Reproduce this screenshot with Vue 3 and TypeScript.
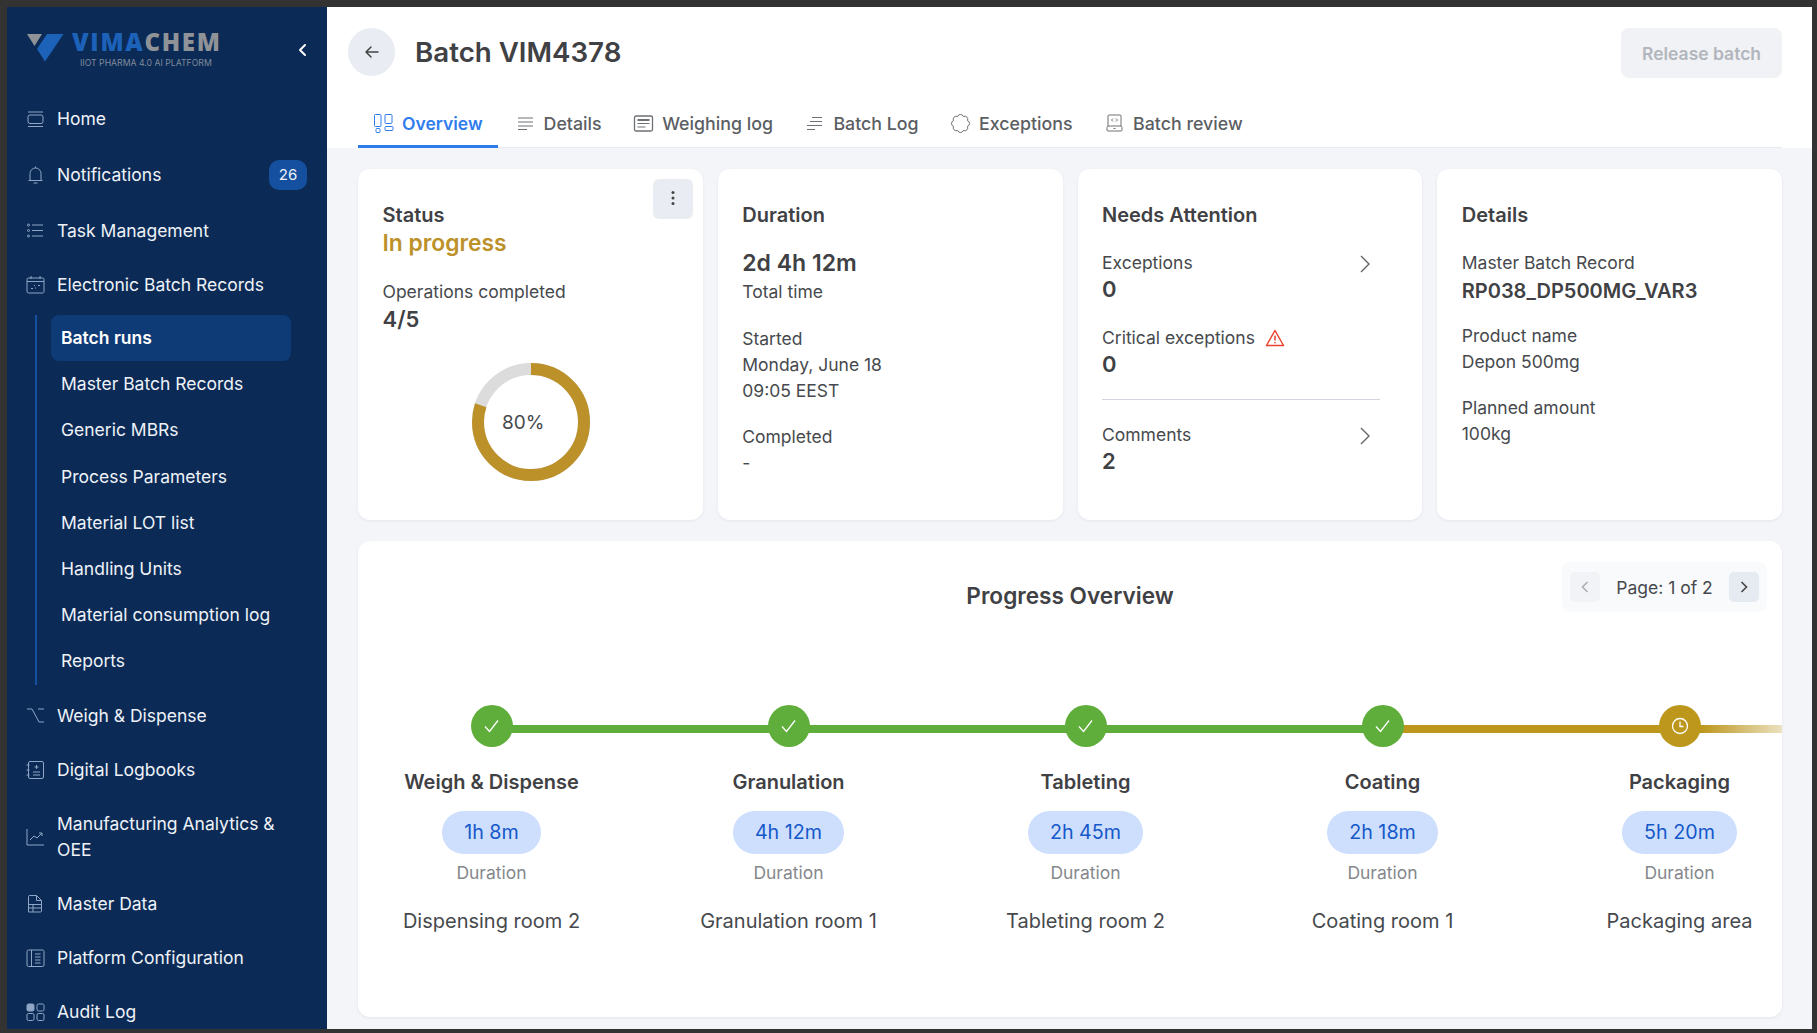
<script setup lang="ts">
interface SubLink { label: string; active?: boolean }
interface Step { name: string; time: string; room: string; state: 'done' | 'running' }

const topNav = [
  { key: 'home', label: 'Home' },
  { key: 'bell', label: 'Notifications', badge: '26' },
  { key: 'tasks', label: 'Task Management' },
  { key: 'records', label: 'Electronic Batch Records' },
]

const subNav: SubLink[] = [
  { label: 'Batch runs', active: true },
  { label: 'Master Batch Records' },
  { label: 'Generic MBRs' },
  { label: 'Process Parameters' },
  { label: 'Material LOT list' },
  { label: 'Handling Units' },
  { label: 'Material consumption log' },
  { label: 'Reports' },
]

const bottomNav = [
  { key: 'weigh', label: 'Weigh & Dispense' },
  { key: 'logbook', label: 'Digital Logbooks' },
  { key: 'chart', label: 'Manufacturing Analytics & OEE' },
  { key: 'data', label: 'Master Data' },
  { key: 'config', label: 'Platform Configuration' },
  { key: 'audit', label: 'Audit Log' },
]

const tabs = [
  { key: 'overview', label: 'Overview', active: true },
  { key: 'details', label: 'Details' },
  { key: 'weighing', label: 'Weighing log' },
  { key: 'batch', label: 'Batch Log' },
  { key: 'exceptions', label: 'Exceptions' },
  { key: 'review', label: 'Batch review' },
]

const steps: Step[] = [
  { name: 'Weigh & Dispense', time: '1h 8m', room: 'Dispensing room 2', state: 'done' },
  { name: 'Granulation', time: '4h 12m', room: 'Granulation room 1', state: 'done' },
  { name: 'Tableting', time: '2h 45m', room: 'Tableting room 2', state: 'done' },
  { name: 'Coating', time: '2h 18m', room: 'Coating room 1', state: 'done' },
  { name: 'Packaging', time: '5h 20m', room: 'Packaging area', state: 'running' },
]

// donut ring, r=53 so the circumference is about 333
const ringLength = 2 * Math.PI * 53
const ringDash = `${ringLength * 0.8} ${ringLength}`
</script>

<template>
  <div class="frame">
    <aside class="sidebar">
      <div class="brand">
        <svg class="brand-mark" width="37" height="28" viewBox="0 0 37 28">
          <polygon points="0,0 15,0 7.500,12" fill="#8f9398" />
          <polygon points="10,15 20,0 36.500,0 18,27.500" fill="#1c62b9" />
        </svg>
        <div class="brand-text">
          <div class="brand-name"><span class="vima">VIMA</span><span class="chem">CHEM</span></div>
          <div class="brand-sub">IIOT PHARMA 4.0 AI PLATFORM</div>
        </div>
        <svg class="collapse" width="12" height="14" viewBox="0 0 12 14" fill="none">
          <path d="M9 2 4 7l5 5" stroke="#fff" stroke-width="2" stroke-linecap="round" stroke-linejoin="round" />
        </svg>
      </div>

      <nav class="nav">
        <a v-for="item in topNav" :key="item.label" class="nav-item">
          <svg class="nav-icon" width="20" height="20" viewBox="0 0 20 20" fill="none" stroke="currentColor" stroke-width="1">
            <template v-if="item.key === 'home'">
              <path d="M3 3h15M3 17.500h15" />
              <rect x="3" y="6" width="15" height="8.500" rx="2" />
            </template>
            <template v-else-if="item.key === 'bell'">
              <path d="M3.500 15.500h14M5 15V8.500a5.500 5.500 0 0 1 11 0V15M10.500 1.500V3M8.500 18h4" />
            </template>
            <template v-else-if="item.key === 'tasks'">
              <path d="M7 4h11M7 9.500h11M7 15h11" />
              <circle cx="3.500" cy="4" r="1" />
              <circle cx="3.500" cy="9.500" r="1" />
              <circle cx="3.500" cy="15" r="1" />
            </template>
            <template v-else>
              <rect x="2" y="3" width="17" height="15" rx="1.500" />
              <path d="M2 6.500h17M6 1v3M15 1v3M6 13.500h2M10 13h1M13 10.500h2M9 10.500h1" />
            </template>
          </svg>
          <span class="nav-label">{{ item.label }}</span>
          <span v-if="item.badge" class="badge">{{ item.badge }}</span>
        </a>

        <div class="subnav">
          <a v-for="link in subNav" :key="link.label" class="sub-item" :class="{ active: link.active }">{{ link.label }}</a>
        </div>

        <a v-for="item in bottomNav" :key="item.label" class="nav-item">
          <svg class="nav-icon" width="20" height="20" viewBox="0 0 20 20" fill="none" stroke="currentColor" stroke-width="1">
            <template v-if="item.key === 'weigh'">
              <path d="M2 3h5l7 13h5M13 3h6" />
            </template>
            <template v-else-if="item.key === 'logbook'">
              <rect x="3.500" y="1.500" width="15" height="17" rx="1.500" />
              <path d="M1.500 5h3M1.500 10h3M1.500 15h3M8 12h7M8 15h7M11.500 5v4M9.500 7h4" />
            </template>
            <template v-else-if="item.key === 'chart'">
              <path d="M2 2v16h17M5 13l4-4 3 2 5-5M14 6h3v3" />
            </template>
            <template v-else-if="item.key === 'data'">
              <path d="M3.500 18V2.500a1 1 0 0 1 1-1h7l5 5V17a1 1 0 0 1-1 1zM11.500 1.500v5h5M3.500 10.500h13M3.500 14h13M8 10.500V18" />
            </template>
            <template v-else-if="item.key === 'config'">
              <rect x="2" y="2" width="17" height="16.500" rx="1.500" />
              <path d="M6.500 2v16.500M10 6h5.500M10 9h5.500M10 12h5.500M10 15h5.500" />
            </template>
            <template v-else>
              <rect x="2" y="2" width="7" height="7" rx="1.500" fill="currentColor" />
              <rect x="12" y="2" width="7" height="7" rx="1.500" />
              <rect x="2" y="11.500" width="7" height="7" rx="1.500" />
              <rect x="12" y="11.500" width="7" height="7" rx="1.500" />
            </template>
          </svg>
          <span class="nav-label">{{ item.label }}</span>
        </a>
      </nav>
    </aside>

    <main class="main">
      <header class="top">
        <div class="title-row">
          <button class="back" aria-label="Back">
            <svg width="18" height="18" viewBox="0 0 18 18" fill="none" stroke="#444" stroke-width="1.500" stroke-linecap="round" stroke-linejoin="round">
              <path d="M15 9H3M8 4 3 9l5 5" />
            </svg>
          </button>
          <h1>Batch VIM4378</h1>
          <button class="release">Release batch</button>
        </div>
        <div class="tabs">
          <a v-for="tab in tabs" :key="tab.label" class="tab" :class="{ active: tab.active }">
            <svg width="21" height="21" viewBox="0 0 21 21" fill="none" stroke="currentColor" stroke-width="1">
              <template v-if="tab.key === 'overview'">
                <rect x="1.500" y="1.500" width="6.500" height="12" rx="1" />
                <rect x="12" y="1.500" width="7" height="9" rx="1" />
                <rect x="12" y="13.500" width="8" height="4" rx="1" />
                <rect x="3" y="15.500" width="4" height="4" rx="1" />
              </template>
              <template v-else-if="tab.key === 'details'">
                <path d="M3 5h15M3 9h15M3 13h15M3 16.500h9" />
              </template>
              <template v-else-if="tab.key === 'batch'">
                <path d="M8 4.500h10M6 8.500h12M3 12.500h15M3 16.500h8" />
              </template>
              <template v-else-if="tab.key === 'weighing'">
                <rect x="1.500" y="3" width="18" height="15" rx="1.500" stroke-width="1.300" />
                <path d="M4.500 7h12" stroke-width="2" />
                <path d="M4.500 10.500h12M4.500 14h8" />
              </template>
              <template v-else-if="tab.key === 'exceptions'">
                <path d="M13.370 3.570A3 3 0 0 1 17.430 7.630A3 3 0 0 1 17.430 13.370A3 3 0 0 1 13.370 17.430A3 3 0 0 1 7.630 17.430A3 3 0 0 1 3.570 13.370A3 3 0 0 1 3.570 7.630A3 3 0 0 1 7.630 3.570A3 3 0 0 1 13.370 3.570Z" />
              </template>
              <template v-else>
                <path d="M5 2h11a1 1 0 0 1 1 1v10H4V3a1 1 0 0 1 1-1zM4 13l-1 1.500V17a1 1 0 0 0 1 1h13a1 1 0 0 0 1-1v-2.500L17 13M9.500 15.500h2M9 5.500 7.500 7 9 8.500M12 5.500 13.500 7 12 8.500" />
              </template>
            </svg>
            {{ tab.label }}
          </a>
        </div>
      </header>

      <section class="content">
        <div class="cards">
          <article class="card">
            <button class="more" aria-label="More">
              <svg width="4" height="16" viewBox="0 0 4 16" fill="#444">
                <circle cx="2" cy="2.500" r="1.500" />
                <circle cx="2" cy="8" r="1.500" />
                <circle cx="2" cy="13.500" r="1.500" />
              </svg>
            </button>
            <h2>Status</h2>
            <div class="status">In progress</div>
            <div class="label gap-status">Operations completed</div>
            <div class="value">4/5</div>
            <div class="donut">
              <svg width="118" height="118" viewBox="0 0 118 118">
                <circle cx="59" cy="59" r="53" fill="none" stroke="#dcdcdc" stroke-width="12" />
                <circle cx="59" cy="59" r="53" fill="none" stroke="#bd912a" stroke-width="12" :stroke-dasharray="ringDash" transform="rotate(-90 59 59)" />
              </svg>
              <span class="donut-text">80%</span>
            </div>
          </article>

          <article class="card">
            <h2>Duration</h2>
            <div class="big">2d 4h 12m</div>
            <div class="label">Total time</div>
            <div class="label gap-block">Started</div>
            <div class="label">Monday, June 18</div>
            <div class="label">09:05 EEST</div>
            <div class="label gap-done">Completed</div>
            <div class="label">-</div>
          </article>

          <article class="card">
            <h2>Needs Attention</h2>
            <div class="attention first">
              <div>
                <div class="label">Exceptions</div>
                <div class="value tight">0</div>
              </div>
              <svg class="chev" width="12" height="20" viewBox="0 0 12 20" fill="none" stroke="#666" stroke-width="1.400">
                <path d="m2 2 8 8-8 8" />
              </svg>
            </div>
            <div class="attention second">
              <div>
                <div class="label critical">Critical exceptions
                  <svg width="20" height="18" viewBox="0 0 20 18" fill="none" stroke="#e8432e" stroke-width="1.500" stroke-linejoin="round">
                    <path d="M10 1.500 1.500 16.500h17zM10 6.500v5M10 13v1.200" />
                  </svg>
                </div>
                <div class="value tight">0</div>
              </div>
            </div>
            <div class="attention third">
              <div>
                <div class="label">Comments</div>
                <div class="value tight">2</div>
              </div>
              <svg class="chev" width="12" height="20" viewBox="0 0 12 20" fill="none" stroke="#666" stroke-width="1.400">
                <path d="m2 2 8 8-8 8" />
              </svg>
            </div>
          </article>

          <article class="card">
            <h2>Details</h2>
            <div class="label gap-details">Master Batch Record</div>
            <div class="mbr">RP038_DP500MG_VAR3</div>
            <div class="label gap-product">Product name</div>
            <div class="label">Depon 500mg</div>
            <div class="label gap-planned">Planned amount</div>
            <div class="label">100kg</div>
          </article>
        </div>

        <article class="progress">
          <div class="pager">
            <button class="page-btn" disabled>
              <svg width="10" height="14" viewBox="0 0 10 14" fill="none" stroke="#a9aeb5" stroke-width="1.600"><path d="M7.500 2 2.500 7l5 5" /></svg>
            </button>
            <span>Page: 1 of 2</span>
            <button class="page-btn next">
              <svg width="10" height="14" viewBox="0 0 10 14" fill="none" stroke="#444" stroke-width="1.600"><path d="m2.500 2 5 5-5 5" /></svg>
            </button>
          </div>
          <h3>Progress Overview</h3>
          <div class="timeline">
            <div v-for="(step, i) in steps" :key="step.name" class="step">
              <div class="track">
                <span class="line" :class="i < 3 ? 'green' : i === 3 ? 'gold' : 'fade'"></span>
                <span class="node" :class="step.state">
                  <svg v-if="step.state === 'done'" width="20" height="20" viewBox="0 0 20 20" fill="none" stroke="#fff" stroke-width="1.300">
                    <path d="m3 10.500 4.500 5L16 4.500" />
                  </svg>
                  <svg v-else width="18" height="18" viewBox="0 0 18 18" fill="none" stroke="#fff" stroke-width="1.300">
                    <circle cx="9" cy="9" r="7.500" />
                    <path d="M9 4.500V9.500h3.500" />
                  </svg>
                </span>
              </div>
              <div class="step-name">{{ step.name }}</div>
              <div class="pill">{{ step.time }}</div>
              <div class="step-caption">Duration</div>
              <div class="step-room">{{ step.room }}</div>
            </div>
          </div>
        </article>
      </section>
    </main>
  </div>
</template>

<style>
html, body {
  margin: 0;
  background: #333;
  overflow: hidden;
}
</style>

<style scoped>
.frame {
  width: 1817px;
  height: 1033px;
  box-sizing: border-box;
  padding: 7px 5px 4px 7px;
  background: #333333;
  display: flex;
  font-family: Inter, "Liberation Sans", sans-serif;
  color: #3f4144;
  overflow: hidden;
}

/* sidebar */
.sidebar {
  width: 320px;
  flex: none;
  background: #0b2a55;
  overflow: hidden;
  color: #eef2f8;
}
.brand {
  display: flex;
  align-items: flex-start;
  height: 77px;
  padding: 23px 19px 0 20px;
  box-sizing: border-box;
}
.brand-mark { flex: none; margin-top: 4px; }
.brand-text { margin-left: 8px; width: 176px; }
.brand-name {
  font-size: 24px;
  line-height: 24px;
  font-weight: 800;
  letter-spacing: 1.700px;
  font-family: "Open Sans", sans-serif;
  white-space: nowrap;
}
.vima { color: #1c62b9; }
.chem { color: #8f9398; }
.brand-sub {
  margin: 3px 0 0 8px;
  font-size: 8.700px;
  line-height: 12px;
  color: #7f8b9b;
  white-space: nowrap;
}
.collapse { margin: 13px 0 0 auto; }

.nav { display: flex; flex-direction: column; padding-top: 8px; }
.nav-item {
  display: flex;
  align-items: center;
  padding: 14px 18px 14px 18px;
  font-size: 17.500px;
  line-height: 26px;
  color: #eef2f8;
}
.nav-icon { flex: none; color: #8fa6c6; margin-right: 12px; }
.nav-label { flex: 1; max-width: 245px; }
.badge {
  width: 38px;
  height: 30px;
  line-height: 30px;
  text-align: center;
  background: #14509f;
  border-radius: 10px;
  font-size: 15px;
  margin-left: auto;
  margin-right: 2px;
}
.subnav {
  margin: 3px 0 4px 28px;
  border-left: 2px solid #14509f;
  padding-left: 14px;
  padding-right: 36px;
  display: flex;
  flex-direction: column;
}
.sub-item {
  height: 46.200px;
  line-height: 46.200px;
  padding-left: 10px;
  font-size: 17.500px;
  border-radius: 8px;
  color: #eef2f8;
  white-space: nowrap;
}
.sub-item.active {
  background: #0e3a75;
  font-weight: 600;
  color: #fff;
}

/* header */
.main {
  flex: 1;
  min-width: 0;
  display: flex;
  flex-direction: column;
  background: #f3f5f9;
}
.top {
  background: #fff;
  padding: 21px 30px 0 21px;
  height: 141px;
  box-sizing: border-box;
}
.title-row { display: flex; align-items: flex-start; height: 50px; }
.back {
  width: 47px;
  height: 48px;
  flex: none;
  border: 0;
  border-radius: 50%;
  background: #e9ecf2;
  display: flex;
  align-items: center;
  justify-content: center;
  padding: 0;
}
h1 {
  margin: 0 0 0 20px;
  font-size: 27.700px;
  line-height: 49px;
  font-weight: 600;
  color: #3f4144;
  flex: 1;
}
.release {
  width: 161px;
  height: 50px;
  border: 0;
  border-radius: 8px;
  background: #f1f2f5;
  color: #b1b6bd;
  font: 600 17.500px Inter, sans-serif;
}
.tabs {
  display: flex;
  margin: 21px 0 0 10px;
  border-bottom: 1px solid #e6e9ef;
  height: 49px;
  box-sizing: border-box;
}
.tab {
  display: flex;
  align-items: center;
  gap: 8px;
  height: 48px;
  box-sizing: border-box;
  padding: 0 15px;
  font-size: 17.800px;
  font-weight: 500;
  color: #5b5e63;
  margin-right: 1.500px;
}
.tab svg { color: #6d7075; }
.tab.active {
  color: #2f7ded;
  font-size: 17.500px;
  font-weight: 600;
  border-bottom: 3px solid #2f7ded;
  height: 49px;
  padding-top: 3px;
  margin-right: 2px;
}
.tab.active svg { color: #2f7ded; }

/* cards */
.content {
  padding: 21px 30px 0 31px;
  display: flex;
  flex-direction: column;
  gap: 21px;
}
.cards {
  display: grid;
  grid-template-columns: repeat(4, 1fr);
  gap: 15px;
}
.card, .progress {
  background: #fff;
  border-radius: 12px;
  box-shadow: 0 1px 3px rgba(40, 50, 80, 0.08);
  position: relative;
  box-sizing: border-box;
}
.card { height: 351px; padding: 32px 24.500px 0; }
h2 {
  margin: 0;
  font-size: 20px;
  line-height: 28px;
  font-weight: 600;
  color: #3f4144;
}
.more {
  position: absolute;
  top: 10px;
  right: 10px;
  width: 40px;
  height: 40px;
  border: 0;
  border-radius: 6px;
  background: #e9ecf2;
  padding: 0;
}
.status {
  font-size: 22.800px;
  line-height: 28px;
  font-weight: 600;
  color: #bd912a;
}
.label {
  font-size: 17.500px;
  line-height: 26px;
  color: #46494d;
}
.gap-status { margin-top: 22px; }
.value {
  font-size: 22px;
  line-height: 28px;
  font-weight: 600;
  color: #3f4144;
}
.value.tight { line-height: 27px; }
.donut {
  position: relative;
  width: 118px;
  height: 118px;
  margin: 30px 0 0 89.500px;
}
.donut svg { display: block; }
.donut-text {
  position: absolute;
  left: 30px;
  top: 46px;
  font-size: 19px;
  line-height: 28px;
  color: #46494d;
}
.big {
  margin-top: 19px;
  font-size: 23px;
  line-height: 31px;
  font-weight: 600;
}
.gap-block { margin-top: 21px; }
.gap-done { margin-top: 20px; }

.attention { display: flex; justify-content: space-between; align-items: flex-start; width: 278px; }
.attention.first { margin-top: 21px; }
.attention.second { margin-top: 22px; padding-bottom: 21px; border-bottom: 1px solid #d3d6df; }
.attention.third { margin-top: 22px; }
.chev { margin: 4px 9px 0 0; }
.critical { display: flex; align-items: center; gap: 10px; }

.gap-details { margin-top: 21px; }
.mbr { font-size: 20px; line-height: 30px; font-weight: 600; }
.gap-product { margin-top: 17px; }
.gap-planned { margin-top: 20px; }

/* progress */
.progress {
  height: 476px;
  padding-top: 40px;
  overflow: hidden;
}
h3 {
  margin: 0;
  text-align: center;
  font-size: 22.600px;
  line-height: 30px;
  font-weight: 600;
  color: #3f4144;
}
.pager {
  position: absolute;
  top: 21px;
  right: 15px;
  width: 205px;
  height: 50px;
  box-sizing: border-box;
  padding: 0 8px;
  background: #f9fafc;
  border-radius: 8px;
  display: flex;
  align-items: center;
  justify-content: space-between;
  font-size: 17.500px;
  color: #46494d;
}
.page-btn {
  width: 30px;
  height: 30px;
  border: 0;
  border-radius: 5px;
  background: #f1f3f6;
  padding: 0;
  display: flex;
  align-items: center;
  justify-content: center;
}
.page-btn.next { background: #e6eaf1; }

.timeline {
  display: grid;
  grid-template-columns: repeat(5, 297px);
  margin: 94px 0 0 -15px;
}
.step {
  display: flex;
  flex-direction: column;
  align-items: center;
  text-align: center;
}
.track {
  position: relative;
  width: 100%;
  height: 42px;
  display: flex;
  justify-content: center;
}
.line {
  position: absolute;
  left: 50%;
  width: 100%;
  top: 20px;
  height: 8px;
}
.line.green { background: #5fae3c; }
.line.gold { background: #bd961c; }
.line.fade {
  width: 104px;
  background: linear-gradient(90deg, #bd961c 20%, #ece3c5 100%);
}
.node {
  position: relative;
  width: 42px;
  height: 42px;
  border-radius: 50%;
  display: flex;
  align-items: center;
  justify-content: center;
}
.node.done { background: #5fae3c; }
.node.running { background: #bd961c; }
.step-name {
  margin-top: 22px;
  font-size: 20px;
  line-height: 26px;
  font-weight: 600;
}
.pill {
  margin-top: 16px;
  height: 43px;
  line-height: 43px;
  padding: 0 22px;
  background: #cddffd;
  border-radius: 22px;
  color: #1558c9;
  font-size: 19.700px;
}
.step-caption {
  margin-top: 7px;
  font-size: 17.500px;
  line-height: 24px;
  color: #85888c;
}
.step-room {
  margin-top: 23px;
  font-size: 20px;
  line-height: 26px;
  color: #46494d;
  white-space: nowrap;
}
</style>
